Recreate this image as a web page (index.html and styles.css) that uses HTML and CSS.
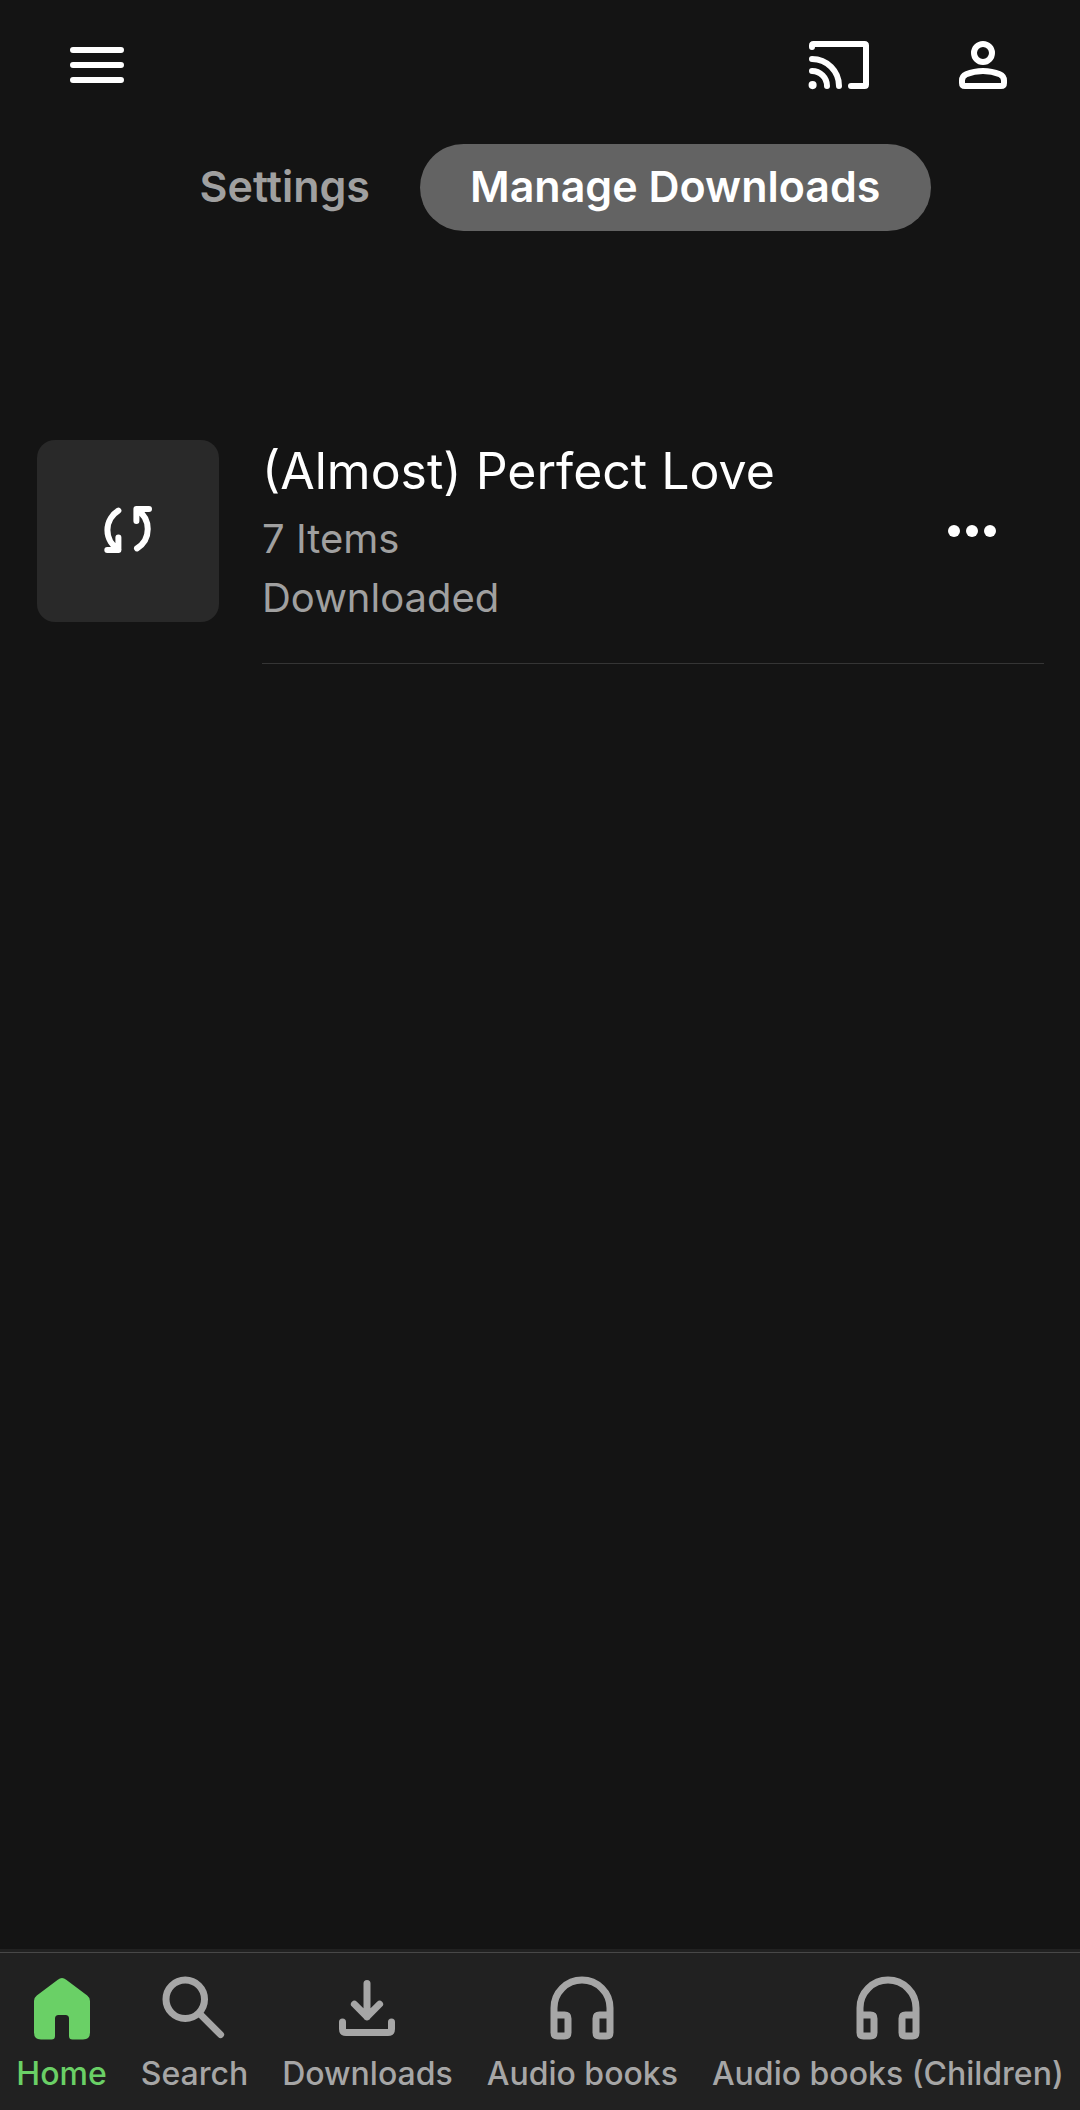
FILE: index.html
```html
<!DOCTYPE html>
<html lang="en">
<head>
<meta charset="utf-8">
<meta name="viewport" content="width=device-width, initial-scale=1">
<title>Manage Downloads</title>
<link rel="stylesheet" href="styles.css">
</head>
<body>
<header class="header">
  <div class="toolbar">
    <button class="icon-button" type="button" aria-label="Menu">
      <svg class="icon" viewBox="0 0 24 24"><path d="M4 7h16M4 12h16M4 17h16"/></svg>
    </button>
    <span class="spacer"></span>
    <button class="icon-button" type="button" aria-label="Cast">
      <svg class="icon" viewBox="0 0 24 24"><path d="M3 6V5.500q0-.5.5-.5H20.500q.5 0 .5.5V18.500q0 .5-.5.5H16M3 10a9 9 0 0 1 9 9M3 14a5 5 0 0 1 5 5"/><circle class="solid" cx="3.200" cy="18.700" r="1.350"/></svg>
    </button>
    <button class="icon-button" type="button" aria-label="Account">
      <svg class="icon" viewBox="0 0 24 24"><circle cx="12" cy="8" r="3"/><path d="M5 17.200c0-1.200.5-1.700 1.400-2.100Q9 14 12 14t5.600 1.100c.9.4 1.400.9 1.400 2.100V18q0 1-1 1H6q-1 0-1-1z"/></svg>
    </button>
  </div>
  <nav class="tabs" aria-label="Sections">
    <button class="tab" type="button">Settings</button>
    <button class="tab tab-active" type="button" aria-current="page">Manage Downloads</button>
  </nav>
</header>
<main class="content">
  <ul class="list">
    <li class="item">
      <div class="thumb">
        <svg class="icon" viewBox="0 0 24 24"><path d="M8.800 5.200A7.600 7.600 0 0 0 8.800 18.200M5.100 18.300H8.800V14.200M15 17.800A7.600 7.600 0 0 0 15 4.900M19 4.700H14.800V8.700"/></svg>
      </div>
      <div class="item-body">
        <div class="item-text">
          <h2 class="item-title">(Almost) Perfect Love</h2>
          <p class="item-meta">7 Items</p>
          <p class="item-meta">Downloaded</p>
        </div>
        <button class="icon-button" type="button" aria-label="More">
          <svg class="icon" viewBox="0 0 24 24"><g class="solid"><circle cx="6" cy="12" r="2"/><circle cx="12" cy="12" r="2"/><circle cx="18" cy="12" r="2"/></g></svg>
        </button>
      </div>
    </li>
  </ul>
</main>
<footer class="footer">
  <nav class="bottom-nav" aria-label="Main">
    <a class="nav-link nav-link-active" href="#home" aria-current="page">
      <svg class="icon nav-icon" viewBox="0 0 24 24"><path class="solid" d="M6 21q-2 0-2-2V10q0-1 .8-1.600l6-4.500q1.200-.9 2.400 0l6 4.500q.8.600.8 1.600v9q0 2-2 2h-3q-1 0-1-1v-5q0-1-1-1h-2q-1 0-1 1v5q0 1-1 1z"/></svg>
      <span>Home</span>
    </a>
    <a class="nav-link" href="#search">
      <svg class="icon nav-icon" viewBox="0 0 24 24"><circle cx="9.500" cy="9.500" r="5.500"/><path d="M13.600 13.600l6 6"/></svg>
      <span>Search</span>
    </a>
    <a class="nav-link" href="#downloads">
      <svg class="icon nav-icon" viewBox="0 0 24 24"><path d="M12 5v9.500M8.400 10.900l3.600 3.600 3.600-3.600M5 16v2q0 1 1 1h12q1 0 1-1v-2"/></svg>
      <span>Downloads</span>
    </a>
    <a class="nav-link" href="#audio-books">
      <svg class="icon nav-icon" viewBox="0 0 24 24"><path d="M4 14v-2a8 8 0 0 1 16 0v2M4 14h3q1 0 1 1v4q0 1-1 1H5q-1 0-1-1zM20 14h-3q-1 0-1 1v4q0 1 1 1h2q1 0 1-1z"/></svg>
      <span>Audio books</span>
    </a>
    <a class="nav-link" href="#audio-books-children">
      <svg class="icon nav-icon" viewBox="0 0 24 24"><path d="M4 14v-2a8 8 0 0 1 16 0v2M4 14h3q1 0 1 1v4q0 1-1 1H5q-1 0-1-1zM20 14h-3q-1 0-1 1v4q0 1 1 1h2q1 0 1-1z"/></svg>
      <span>Audio books (Children)</span>
    </a>
  </nav>
</footer>
</body>
</html>
```
FILE: styles.css
```css
* {
  box-sizing: border-box;
}

body {
  margin: 0;
  min-height: 100vh;
  display: flex;
  flex-direction: column;
  background: #141414;
  color: #fff;
  font-family: Inter, "Liberation Sans", sans-serif;
}

button {
  margin: 0;
  border: 0;
  background: none;
  color: inherit;
  font: inherit;
}

.icon {
  display: block;
  width: 72px;
  height: 72px;
  fill: none;
  stroke: currentColor;
  stroke-width: 2;
  stroke-linecap: round;
  stroke-linejoin: round;
}

.solid {
  fill: currentColor;
  stroke: none;
}

.toolbar {
  display: flex;
  align-items: center;
  height: 130px;
  padding: 0 25px;
}

.spacer {
  flex: 1;
}

.icon-button {
  flex: none;
  padding: 28px 36px;
}

.tabs {
  display: flex;
  justify-content: center;
  padding: 14px 0;
}

.tab {
  padding: 16px 50px 18px;
  border-radius: 44px;
  color: #a0a0a0;
  font-size: 43px;
  font-weight: 600;
  line-height: 53px;
  white-space: nowrap;
}

.tab-active {
  background: #636363;
  color: #fff;
}

.content {
  flex: 1;
  padding: 153px 36px 36px 37px;
}

.list {
  margin: 0;
  padding: 0;
  list-style: none;
}

.item {
  display: flex;
  align-items: center;
}

.thumb {
  flex: none;
  display: grid;
  place-items: center;
  width: 182px;
  height: 182px;
  margin-right: 43px;
  border-radius: 18px;
  background: #292929;
}

.item-body {
  flex: 1;
  display: flex;
  align-items: center;
  min-height: 266px;
  border-bottom: 1px solid #353535;
}

.item-text {
  flex: 1;
}

.item-title {
  margin: 0 0 2px;
  font-size: 50px;
  font-weight: 400;
  line-height: 72px;
}

.item-meta {
  margin: 0;
  color: #a0a0a0;
  font-size: 40px;
  line-height: 59px;
}

.footer {
  padding-top: 3px;
  background: #212121;
}

.bottom-nav {
  display: flex;
  justify-content: center;
  border-top: 1px solid #484848;
}

.nav-link {
  display: flex;
  flex-direction: column;
  align-items: center;
  padding: 13px 17px 12px;
  color: #a6a6a6;
  font-size: 32px;
  font-weight: 500;
  line-height: 48px;
  text-decoration: none;
  white-space: nowrap;
}

.nav-link-active {
  color: #6ad066;
}

.nav-icon {
  width: 84px;
  height: 84px;
}
```
